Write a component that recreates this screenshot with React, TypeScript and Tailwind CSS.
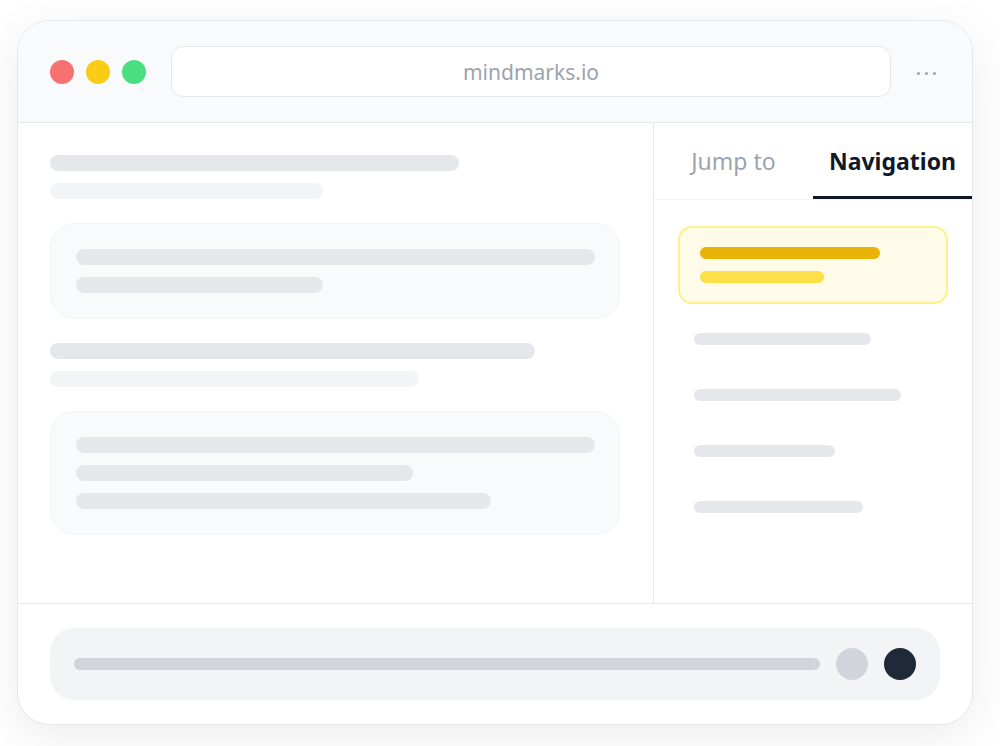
export default function App() {
  const font = { fontFamily: '"Noto Sans", "Open Sans", sans-serif' };
  return (
    <div className="w-[1000px] h-[746px] bg-white pl-[17px] pt-[20px]" style={font}>
      <div className="w-[956px] h-[705px] rounded-[32px] border border-gray-200 bg-white shadow-[0_12px_48px_rgba(0,0,0,0.08)] overflow-hidden flex flex-col">
        {/* browser chrome */}
        <div className="h-[102px] shrink-0 bg-[#f9fafb] border-b border-gray-200 flex items-center pl-[32px] pr-[30px]">
          <div className="flex items-center gap-[12px]">
            <span className="w-[24px] h-[24px] rounded-full bg-[#f87171]" />
            <span className="w-[24px] h-[24px] rounded-full bg-[#facc15]" />
            <span className="w-[24px] h-[24px] rounded-full bg-[#4ade80]" />
          </div>
          <div className="ml-[25px] w-[720px] h-[51px] rounded-[12px] bg-white border border-gray-200 flex items-center justify-center pt-[3px] text-[21px] text-[#9ca3af]">
            mindmarks.io
          </div>
          <div className="ml-[26px] mt-[4px] flex items-center gap-[5px]">
            <span className="w-[3px] h-[3px] rounded-full bg-[#9ca3af]" />
            <span className="w-[3px] h-[3px] rounded-full bg-[#9ca3af]" />
            <span className="w-[3px] h-[3px] rounded-full bg-[#9ca3af]" />
          </div>
        </div>

        {/* body */}
        <div className="flex h-[480px] shrink-0">
          <div className="w-[636px] border-r border-gray-200 pt-[32px] pl-[32px] pr-[32px]">
            <div className="h-[16px] w-[409px] rounded-full bg-[#e5e7eb]" />
            <div className="mt-[12px] h-[16px] w-[273px] rounded-full bg-[#f3f4f6]" />
            <div className="mt-[24px] w-[570px] rounded-[24px] bg-[#f9fafb] border border-[#f3f4f6] px-[25px] py-[25px] flex flex-col gap-[12px]">
              <div className="h-[16px] w-[519px] rounded-full bg-[#e5e7eb]" />
              <div className="h-[16px] w-[247px] rounded-full bg-[#e5e7eb]" />
            </div>
            <div className="mt-[24px] h-[16px] w-[485px] rounded-full bg-[#e5e7eb]" />
            <div className="mt-[12px] h-[16px] w-[369px] rounded-full bg-[#f3f4f6]" />
            <div className="mt-[24px] w-[570px] rounded-[24px] bg-[#f9fafb] border border-[#f3f4f6] px-[25px] py-[25px] flex flex-col gap-[12px]">
              <div className="h-[16px] w-[519px] rounded-full bg-[#e5e7eb]" />
              <div className="h-[16px] w-[337px] rounded-full bg-[#e5e7eb]" />
              <div className="h-[16px] w-[415px] rounded-full bg-[#e5e7eb]" />
            </div>
          </div>

          <div className="flex-1 flex flex-col">
            <div className="h-[77px] flex border-b border-[#f3f4f6]">
              <div className="flex-1 flex items-center justify-center text-[23px] text-[#9ca3af]">Jump to</div>
              <div className="flex-1 flex items-center justify-center text-[23px] font-bold text-[#111827] border-b-[3px] border-[#111827] pt-[3px]">
                Navigation
              </div>
            </div>
            <div className="px-[24px] pt-[26px]">
              <div className="h-[78px] rounded-[14px] bg-[#fefce8] border-2 border-[#fef08a] px-[20px] pt-[19px] flex flex-col gap-[12px]">
                <div className="h-[12px] w-[180px] rounded-full bg-[#eab308]" />
                <div className="h-[12px] w-[124px] rounded-full bg-[#fde047]" />
              </div>
              <div className="pl-[16px] pt-[29px] flex flex-col gap-[44px]">
                <div className="h-[12px] w-[177px] rounded-full bg-[#e5e7eb]" />
                <div className="h-[12px] w-[207px] rounded-full bg-[#e5e7eb]" />
                <div className="h-[12px] w-[141px] rounded-full bg-[#e5e7eb]" />
                <div className="h-[12px] w-[169px] rounded-full bg-[#e5e7eb]" />
              </div>
            </div>
          </div>
        </div>

        {/* footer */}
        <div className="flex-1 border-t border-gray-200 px-[32px] pt-[24px]">
          <div className="h-[72px] rounded-[24px] bg-[#f3f4f6] flex items-center pl-[24px] pr-[24px]">
            <div className="h-[12px] flex-1 rounded-full bg-[#d1d5db]" />
            <span className="ml-[16px] w-[32px] h-[32px] rounded-full bg-[#d1d5db]" />
            <span className="ml-[16px] w-[32px] h-[32px] rounded-full bg-[#1f2937]" />
          </div>
        </div>
      </div>
    </div>
  );
}
